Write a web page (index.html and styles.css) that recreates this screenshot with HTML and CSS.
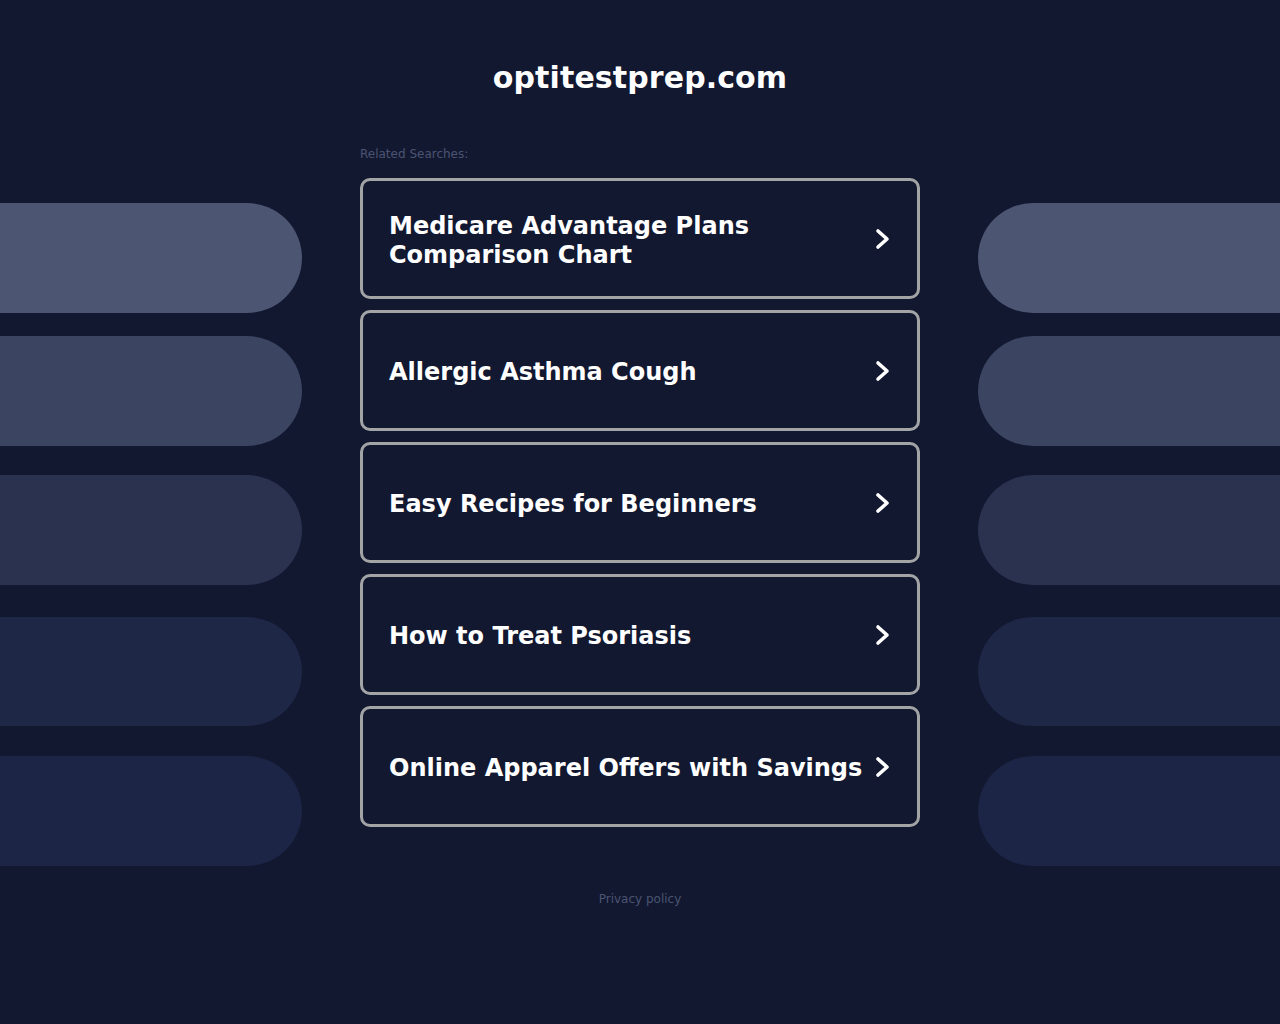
FILE: index.html
```html
<!DOCTYPE html>
<html lang="en">
<head>
<meta charset="utf-8">
<title>optitestprep.com</title>
<link rel="stylesheet" href="styles.css">
</head>
<body>
<div class="page">
  <div class="side side-left">
    <div class="pill p1"></div>
    <div class="pill p2"></div>
    <div class="pill p3"></div>
    <div class="pill p4"></div>
    <div class="pill p5"></div>
  </div>
  <main class="center">
    <h1 class="domain">optitestprep.com</h1>
    <div class="related">Related Searches:</div>
    <ul class="links">
      <li><a class="card" href="#"><span class="label">Medicare Advantage Plans Comparison Chart</span><svg class="chev" viewBox="0 0 20 24" width="20" height="24"><path d="M5 4 L14 12 L5 20" fill="none" stroke="#ffffff" stroke-width="3.6" stroke-linecap="round" stroke-linejoin="round"/></svg></a></li>
      <li><a class="card" href="#"><span class="label">Allergic Asthma Cough</span><svg class="chev" viewBox="0 0 20 24" width="20" height="24"><path d="M5 4 L14 12 L5 20" fill="none" stroke="#ffffff" stroke-width="3.6" stroke-linecap="round" stroke-linejoin="round"/></svg></a></li>
      <li><a class="card" href="#"><span class="label">Easy Recipes for Beginners</span><svg class="chev" viewBox="0 0 20 24" width="20" height="24"><path d="M5 4 L14 12 L5 20" fill="none" stroke="#ffffff" stroke-width="3.6" stroke-linecap="round" stroke-linejoin="round"/></svg></a></li>
      <li><a class="card" href="#"><span class="label">How to Treat Psoriasis</span><svg class="chev" viewBox="0 0 20 24" width="20" height="24"><path d="M5 4 L14 12 L5 20" fill="none" stroke="#ffffff" stroke-width="3.6" stroke-linecap="round" stroke-linejoin="round"/></svg></a></li>
      <li><a class="card" href="#"><span class="label">Online Apparel Offers with Savings</span><svg class="chev" viewBox="0 0 20 24" width="20" height="24"><path d="M5 4 L14 12 L5 20" fill="none" stroke="#ffffff" stroke-width="3.6" stroke-linecap="round" stroke-linejoin="round"/></svg></a></li>
    </ul>
    <div class="footer"><a href="#">Privacy policy</a></div>
  </main>
  <div class="side side-right">
    <div class="pill p1"></div>
    <div class="pill p2"></div>
    <div class="pill p3"></div>
    <div class="pill p4"></div>
    <div class="pill p5"></div>
  </div>
</div>
</body>
</html>
```

FILE: styles.css
```css
html, body {
  margin: 0;
  padding: 0;
  background: #121830;
  height: 100%;
}
body {
  font-family: "DejaVu Sans", sans-serif;
  color: #ffffff;
}
.page {
  display: grid;
  grid-template-columns: 302px 1fr 302px;
  min-height: 1024px;
}
.side {
  display: flex;
  flex-direction: column;
  padding-top: 203px;
}
.pill {
  height: 110px;
  flex: none;
}
.side-left .pill { border-radius: 0 55px 55px 0; }
.side-right .pill { border-radius: 55px 0 0 55px; }
.pill.p1 { background: #4c5571; }
.pill.p2 { background: #3b4461; margin-top: 23px; }
.pill.p3 { background: #2a3250; margin-top: 29px; }
.pill.p4 { background: #1f2746; margin-top: 32px; height: 109px; }
.pill.p5 { background: #1c2545; margin-top: 30px; }

.center {
  display: flex;
  flex-direction: column;
  align-items: center;
}
.domain {
  margin: 60px 0 0;
  font-size: 30px;
  font-weight: bold;
  line-height: 36px;
  color: #ffffff;
  letter-spacing: 0.1px;
}
.related {
  width: 560px;
  margin-top: 51px;
  font-size: 12px;
  line-height: 14px;
  color: #4b5472;
}
.links {
  list-style: none;
  margin: 17px 0 0;
  padding: 0;
  width: 560px;
  display: flex;
  flex-direction: column;
  gap: 11px;
}
.card {
  box-sizing: border-box;
  height: 121px;
  display: flex;
  align-items: center;
  justify-content: space-between;
  gap: 6px;
  padding: 0 26px 0 26px;
  border: 3px solid #a3a4a6;
  border-radius: 10px;
  text-decoration: none;
  color: #ffffff;
}
.label {
  flex: 1;
  font-size: 24px;
  font-weight: bold;
  line-height: 29px;
  padding-top: 4px;
}
.chev {
  flex: none;
  margin-right: -2px;
}
.footer {
  margin-top: 65px;
  font-size: 12px;
  line-height: 14px;
}
.footer a {
  color: #4b5472;
  text-decoration: none;
}
```
